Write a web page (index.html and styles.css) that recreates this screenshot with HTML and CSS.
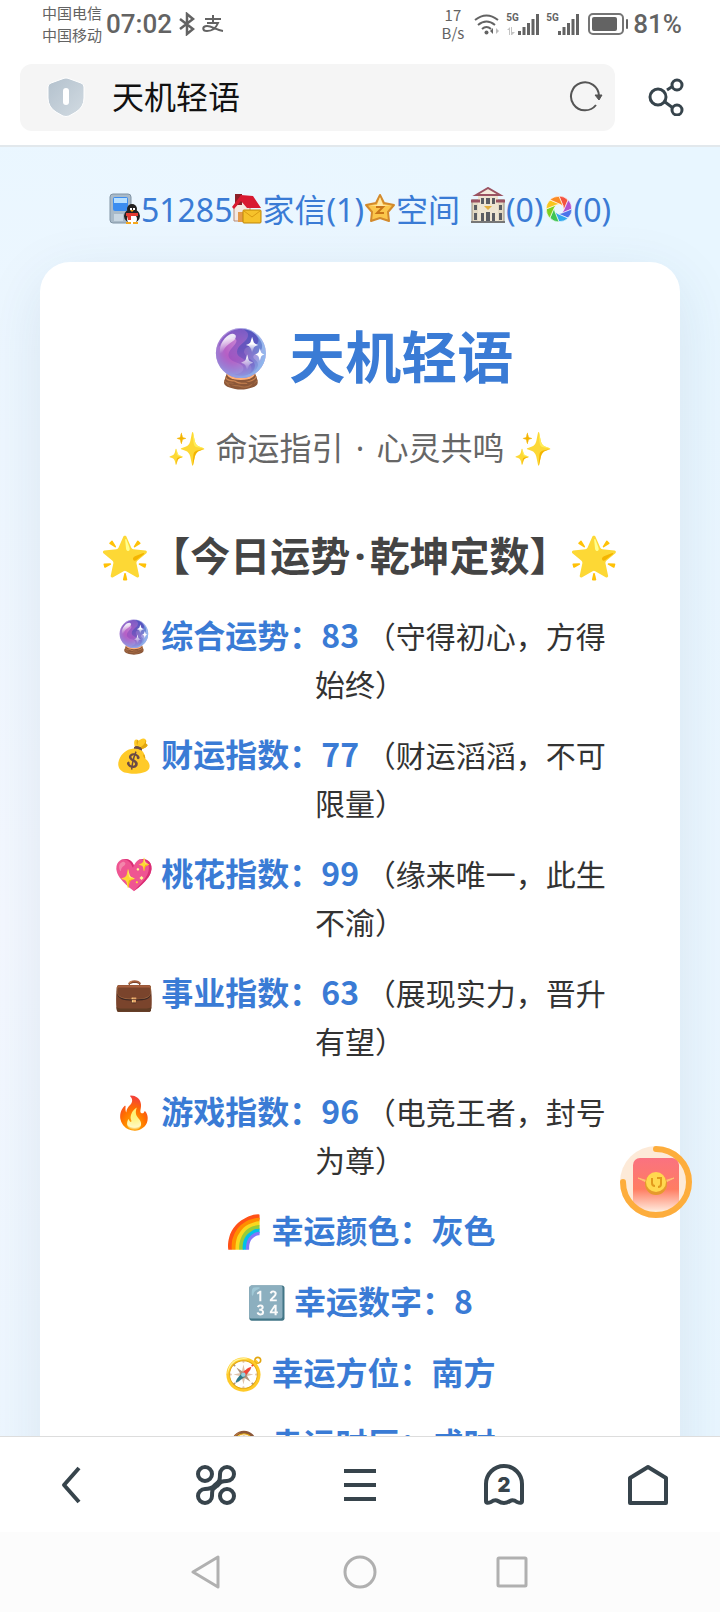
FILE: index.html
```html
<!DOCTYPE html>
<html lang="zh-CN">
<head>
    <meta charset="UTF-8">
    <meta name="viewport" content="width=device-width, initial-scale=1.0">
    <title>天机轻语</title>
    <link rel="stylesheet" href="styles.css">
</head>
<body>

    <!-- Status bar -->
    <div class="status-bar">
        <div class="carriers"><span>中国电信</span><span>中国移动</span></div>
        <span class="clock">07:02</span>
        <svg class="bluetooth" width="18" height="24" viewBox="0 0 18 24"><path d="M2 7l13 10-6 5V2l6 5L2 17" fill="none" stroke="#636363" stroke-width="2.500"/></svg>
        <svg class="pay" width="22" height="18" viewBox="0 0 22 18" fill="none" stroke="#636363" stroke-width="2"><path d="M3 4h16M11 0v8M5 8h11c-2 5-6 8-11 8-5 0-5-5 0-5 5 0 9 4 16 5"/></svg>
        <div class="net-speed"><span>17</span><span>B/s</span></div>
        <svg class="wifi" width="26" height="24" viewBox="0 0 26 24" fill="none" stroke="#636363" stroke-width="2">
            <path d="M1 8q11.500-9 23 0M4 13q8.500-7 17 0M8 17q4.500-4 9 0"/>
            <circle cx="12.500" cy="20.500" r="2" fill="#636363" stroke="none"/>
            <path d="M19 16v6l-3-3z" fill="#636363" stroke="none"/><path d="M22 16v6l3-3z" fill="#bbb" stroke="none"/>
        </svg>
        <div class="signal">
            <span>5G</span>
            <svg width="34" height="22" viewBox="0 0 34 22" fill="#636363"><path d="M12 18h3v4h-3zM16.500 14h3v8h-3zM21 10h3v12h-3zM25.500 6h3v16h-3zM30 1h3v21h-3z"/><path d="M1 17l3-3v8H3v-5zM5 14h1v5h3l-3 3H5z" fill="#c4c4c4"/></svg>
        </div>
        <div class="signal">
            <span>5G</span>
            <svg width="34" height="22" viewBox="0 0 34 22" fill="#636363"><path d="M12 18h3v4h-3zM16.500 14h3v8h-3zM21 10h3v12h-3zM25.500 6h3v16h-3zM30 1h3v21h-3z"/></svg>
        </div>
        <svg class="battery" width="41" height="22" viewBox="0 0 41 22"><rect x="1" y="1" width="34" height="20" rx="4" fill="none" stroke="#757575" stroke-width="2"/><rect x="4" y="4" width="25" height="14" rx="2" fill="#636363"/><rect x="38" y="6" width="2" height="10" rx="1" fill="#636363"/></svg>
        <span class="clock">81%</span>
    </div>

    <!-- Address bar -->
    <header class="browser-bar">
        <div class="address">
            <svg width="38" height="40" viewBox="0 0 38 40">
                <defs><linearGradient id="shield" x1="0" y1="0" x2="1" y2="1"><stop offset="0" stop-color="#b3c1cd"/><stop offset="1" stop-color="#d2dbe2"/></linearGradient></defs>
                <path d="M19 1q2 0 4 1l11 4q3 1 3 4v11q0 9-8 14l-7 4q-3 1-6 0l-7-4q-8-5-8-14V10q0-3 3-4l11-4q2-1 4-1z" fill="url(#shield)" stroke="#fff" stroke-width="1"/>
                <rect x="16" y="11" width="6" height="17" rx="3" fill="#fff"/>
            </svg>
            <input type="text" value="天机轻语" aria-label="地址栏">
            <button class="icon-btn" aria-label="刷新">
                <svg width="34" height="34" viewBox="0 0 34 34"><path d="M30 16a14 14 0 1 0-3 9" fill="none" stroke="#555" stroke-width="2"/><path d="M26 15h7l-3 5z" fill="#555" stroke="#555"/></svg>
            </button>
        </div>
        <button class="icon-btn share" aria-label="分享">
            <svg width="36" height="38" viewBox="0 0 36 38" fill="none" stroke="#37444c" stroke-width="3"><circle cx="10" cy="19" r="8"/><circle cx="29" cy="7" r="5"/><circle cx="29" cy="32" r="5"/><path d="M19 12l6-4M17 24l8 6"/></svg>
        </button>
    </header>

    <!-- Page content -->
    <main class="page">
        <nav class="links">
            <a href="#"><svg width="32" height="32" viewBox="0 0 32 32">
                <rect x="1" y="1" width="21" height="29" rx="3" fill="#a9bac8" stroke="#8094a5"/><rect x="4" y="4" width="15" height="14" rx="2" fill="#3b8df0"/><path d="M5 5h13v5H5z" fill="#b8e0ff"/><path d="M5 21h9v7H5z" fill="#c8d6e1"/>
                <ellipse cx="23" cy="23" rx="8" ry="7" fill="#222"/><ellipse cx="23" cy="26" rx="5" ry="5" fill="#fff"/><circle cx="23" cy="16" r="5" fill="#222"/><path d="M21 15h2v2h-2zM24 15h2v2h-2z" fill="#fff"/><path d="M17 20h12v3H17zM18 22h4v5h-3z" fill="#e53b32"/><path d="M21 17h4l-2 2zM17 29h5v2h-5zM24 29h5v2h-5z" fill="#f6a81c"/>
            </svg>51285</a><a href="#"><svg width="30" height="32" viewBox="0 0 30 32">
                <path d="M2 14l8-6 8 6v14H2z" fill="#f4e9e2" stroke="#b78b78"/><path d="M3 1h7v11H3z" fill="#8c2028"/><path d="M0 14L9 2l12 1 8 12H15L9 8l-7 8z" fill="#d81930"/><path d="M6 19h5v10H6z" fill="#e49a4a"/><rect x="11" y="17" width="18" height="13" rx="1" fill="#f6c22b" stroke="#be8508"/><path d="M12 18l8 6 8-6" fill="none" stroke="#d99a12" stroke-width="1"/>
            </svg>家信(1)</a><a href="#"><svg width="32" height="32" viewBox="0 0 32 32">
                <path d="M16 2l4 8 10 2-6 7 1 9-9-3-9 3 1-9-6-7 10-2z" fill="#fbc64b" stroke="#d38a2c" stroke-width="2" stroke-linejoin="round"/><path d="M16 4l3 8 8 1H5l8-1z" fill="#ffe9a8"/><path d="M12 14h7l-6 6h7" fill="none" stroke="#c97618" stroke-width="2"/>
            </svg>空间</a>
            <a href="#"><svg class="tall" width="36" height="36" viewBox="0 0 36 36">
                <path d="M2 13h32v22H2z" fill="#e3d9c3" stroke="#998f80"/><path d="M8 8h20v26H8z" fill="#eee5d2"/><path d="M6 8L18 1l12 7z" fill="#f4ebdc" stroke="#9b5362" stroke-width="2"/><path d="M1 14h9M26 14h9" stroke="#9b5362" stroke-width="3"/><path d="M4 18h3v5H4zM29 18h3v5h-3zM4 26h3v7H4zM29 26h3v7h-3zM11 11h3v6h-3zM16 11h4v6h-4zM22 11h3v6h-3zM11 26h3v8h-3zM16 25h4v9h-4zM22 26h3v8h-3z" fill="#5b5d63"/><path d="M14 19h8l-4 4z" fill="#e4af3e"/><path d="M1 35h34" stroke="#777" stroke-width="2"/>
            </svg>(0)</a><a href="#"><svg width="30" height="32" viewBox="-15 -16 30 32">
                <defs><path id="blade" d="M0-13A13 13 0 0 1 9-9L5 1 4-3z" stroke="#fff" stroke-width=".6"/></defs>
                <use href="#blade" fill="#f4533f"/>
                <use href="#blade" fill="#b052d0" transform="rotate(45)"/>
                <use href="#blade" fill="#4b74ea" transform="rotate(90)"/>
                <use href="#blade" fill="#31a9ee" transform="rotate(135)"/>
                <use href="#blade" fill="#3fc455" transform="rotate(180)"/>
                <use href="#blade" fill="#7fd01f" transform="rotate(225)"/>
                <use href="#blade" fill="#f9c61d" transform="rotate(270)"/>
                <use href="#blade" fill="#fb8b25" transform="rotate(315)"/>
            </svg>(0)</a>
        </nav>

        <section class="card">
            <h1>🔮 天机轻语</h1>
            <p class="subtitle">✨ 命运指引 <span class="dot">·</span> 心灵共鸣 ✨</p>
            <h2>🌟【今日运势<span class="dot">·</span>乾坤定数】🌟</h2>
            <div class="fortune">
                <p><strong>🔮 综合运势：83</strong> （守得初心，方得始终）</p>
                <p><strong>💰 财运指数：77</strong> （财运滔滔，不可限量）</p>
                <p><strong>💖 桃花指数：99</strong> （缘来唯一，此生不渝）</p>
                <p><strong>💼 事业指数：63</strong> （展现实力，晋升有望）</p>
                <p><strong>🔥 游戏指数：96</strong> （电竞王者，封号为尊）</p>
                <p><strong>🌈 幸运颜色：灰色</strong></p>
                <p><strong>🔢 幸运数字：8</strong></p>
                <p><strong>🧭 幸运方位：南方</strong></p>
                <p><strong>🕰️ 幸运时辰：戌时</strong></p>
            </div>
        </section>

        <!-- Floating reward -->
        <button class="reward" aria-label="红包">
            <svg width="72" height="72" viewBox="0 0 72 72">
                <defs><linearGradient id="packet" x1="0" y1="0" x2="0" y2="1"><stop offset="0" stop-color="#fa7280"/><stop offset=".6" stop-color="#ff7d62"/><stop offset="1" stop-color="#ffe3d5"/></linearGradient></defs>
                <circle cx="36" cy="36" r="36" fill="#fdead8"/>
                <rect x="13" y="12" width="46" height="52" rx="7" fill="url(#packet)"/>
                <path d="M36 3a33 33 0 1 1-33 33" fill="none" stroke="#fdad3c" stroke-width="6" stroke-linecap="round"/>
                <path d="M18 32l10 5v-2zM54 32l-10 5v-2z" fill="#ffc274" stroke="#ffc274"/>
                <circle cx="36" cy="38" r="11" fill="#e69a2c"/><circle cx="36" cy="36" r="10" fill="#ffd84f"/>
                <path d="M32 32v5q0 3 3 3M37 32h4v6q0 3-3 3" fill="none" stroke="#e29a1c" stroke-width="2"/>
            </svg>
        </button>
    </main>

    <!-- Browser toolbar -->
    <footer class="toolbar">
        <button class="icon-btn" aria-label="后退"><svg width="40" height="44" viewBox="0 0 40 44"><path d="M27 5L12 22l15 17" /></svg></button>
        <button class="icon-btn" aria-label="发现"><svg width="40" height="44" viewBox="0 0 40 44"><circle cx="9" cy="11" r="7"/><circle cx="31" cy="33" r="7"/><path d="M31 4a7 7 0 0 1 0 14c-7 0-7 2-10 5-4 3-5 2-5 10a7 7 0 1 1-7-7c7 0 8-2 10-4 4-4 5-3 5-11a7 7 0 0 1 7-7z"/></svg></button>
        <button class="icon-btn" aria-label="菜单"><svg width="40" height="44" viewBox="0 0 40 44"><path d="M4 8h32M4 22h32M4 36h32"/></svg></button>
        <button class="icon-btn tabs" aria-label="标签页"><svg width="44" height="44" viewBox="0 0 44 44"><path d="M4 38V21a18 18 0 0 1 36 0v17q0 3-5 1-4-3-7-1-6 4-12 0-3-2-7 1-5 2-5-1z"/></svg><span>2</span></button>
        <button class="icon-btn" aria-label="主页"><svg width="40" height="44" viewBox="0 0 40 44"><path d="M2 15L20 4l18 11v25H2z"/></svg></button>
    </footer>

    <!-- System navigation -->
    <div class="system-nav">
        <button class="icon-btn" aria-label="返回"><svg width="34" height="36" viewBox="0 0 34 36"><path d="M27 3v30L2 18z"/></svg></button>
        <button class="icon-btn" aria-label="桌面"><svg width="34" height="36" viewBox="0 0 34 36"><circle cx="17" cy="18" r="15"/></svg></button>
        <button class="icon-btn" aria-label="最近任务"><svg width="34" height="36" viewBox="0 0 34 36"><rect x="3" y="4" width="28" height="28" rx="1"/></svg></button>
    </div>

</body>
</html>
```
FILE: styles.css
```css
* {
    box-sizing: border-box;
}
body {
    margin: 0;
    height: 100vh;
    display: flex;
    flex-direction: column;
    background: #fff;
    color: #333;
    font-family: "Noto Sans CJK SC", "Noto Color Emoji", sans-serif;
}
svg {
    display: block;
    flex: none;
}
.icon-btn {
    display: flex;
    align-items: center;
    justify-content: center;
    padding: 0;
    border: none;
    background: none;
    cursor: pointer;
}

/* Status bar */
.status-bar {
    display: flex;
    align-items: center;
    height: 48px;
    padding: 0 38px 0 42px;
    color: #636363;
}
.carriers,
.net-speed {
    display: flex;
    flex-direction: column;
    font-size: 15px;
    line-height: 22px;
}
.net-speed {
    margin-left: auto;
    margin-right: 10px;
    line-height: 18px;
    text-align: center;
}
.clock {
    font-family: Roboto, sans-serif;
    font-size: 26px;
    font-weight: 500;
    line-height: 48px;
    margin-left: 4px;
}
.bluetooth {
    margin-left: 6px;
}
.pay {
    margin-left: 6px;
}
.signal {
    position: relative;
    margin-left: 6px;
}
.signal span {
    position: absolute;
    left: 0;
    top: 0;
    font: bold 10px/10px Roboto, sans-serif;
}
.battery {
    margin-left: 8px;
}

/* Address bar */
.browser-bar {
    display: flex;
    align-items: center;
    height: 99px;
    padding: 1px 36px 0 20px;
    border-bottom: 2px solid #e2e8ec;
}
.address {
    flex: 1;
    display: flex;
    align-items: center;
    height: 67px;
    padding: 0 12px 0 27px;
    border-radius: 12px;
    background: #f5f5f5;
}
.address input {
    flex: 1;
    min-width: 0;
    margin-left: 27px;
    padding: 0 0 4px;
    border: none;
    outline: none;
    background: none;
    color: #111;
    font: 32px "Noto Sans CJK SC", sans-serif;
}
.share {
    margin-left: 33px;
}

/* Page */
.page {
    position: relative;
    flex: 1;
    min-height: 0;
    overflow: hidden;
    padding: 36px 40px 0;
    background: radial-gradient(circle at 0 60%, #f4f8ff, #e8f6ff 90%);
}
.links {
    display: flex;
    justify-content: center;
    height: 79px;
    font-family: "Noto Sans", "Noto Sans CJK SC", sans-serif;
    font-size: 32px;
    line-height: 54px;
}
.links a {
    display: flex;
    color: #3a7bd5;
    text-decoration: none;
}
.links a svg {
    margin-top: 10px;
}
.links a .tall {
    margin-top: 4px;
}
.links a:nth-child(4) {
    margin-left: 10px;
}
.card {
    padding: 50px 60px;
    border-radius: 30px;
    background: #fff;
    box-shadow: 0 16px 60px rgba(30, 70, 110, 0.1);
    text-align: center;
}
h1 {
    margin: 0;
    color: #3a7bd5;
    font-size: 56px;
    line-height: 84px;
}
.subtitle {
    margin: 28px 0 0;
    color: #666;
    font-family: "Noto Sans", "Noto Sans CJK SC", "Noto Color Emoji", sans-serif;
    font-size: 32px;
    line-height: 48px;
}
.dot {
    margin: 0 4px;
}
h2 {
    display: flex;
    justify-content: center;
    margin: 53px 0 0;
    color: #444;
    font-family: "Noto Sans", "Noto Sans CJK SC", "Noto Color Emoji", sans-serif;
    font-size: 40px;
    line-height: 62px;
    white-space: nowrap;
}
.fortune {
    margin-top: 24px;
    padding: 0 4px;
    font-size: 30px;
    line-height: 48px;
}
.fortune p {
    margin: 0 0 23px;
}
.fortune strong {
    color: #3a7bd5;
    font-size: 32px;
    line-height: 40px;
}
.reward {
    position: absolute;
    right: 28px;
    bottom: 218px;
    padding: 0;
    border: none;
    border-radius: 50%;
    background: none;
    cursor: pointer;
}

/* Bottom bars */
.toolbar {
    display: flex;
    justify-content: space-around;
    height: 96px;
    border-top: 1px solid #ddd;
    background: #fff;
}
.toolbar svg {
    fill: none;
    stroke: #37444c;
    stroke-width: 4;
    stroke-linejoin: round;
}
.toolbar .icon-btn {
    flex: 1;
}
.tabs {
    position: relative;
}
.tabs span {
    position: absolute;
    inset: 0;
    color: #37444c;
    font: 900 20px/96px Inter, sans-serif;
}
.system-nav {
    display: flex;
    justify-content: center;
    gap: 118px;
    height: 80px;
    background: #fcfcfc;
}
.system-nav svg {
    fill: none;
    stroke: #b0b0b0;
    stroke-width: 3;
    stroke-linejoin: round;
}
```
